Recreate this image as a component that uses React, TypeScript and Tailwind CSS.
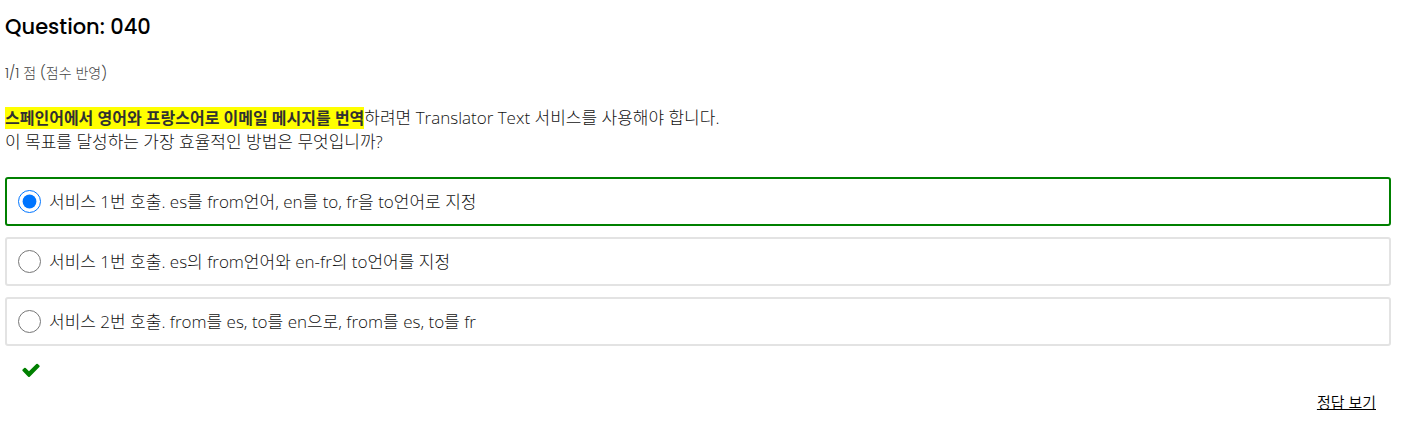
import { useState } from "react";

const options = [
  "서비스 1번 호출. es를 from언어, en를 to, fr을 to언어로 지정",
  "서비스 1번 호출. es의 from언어와 en-fr의 to언어를 지정",
  "서비스 2번 호출. from를 es, to를 en으로, from를 es, to를 fr",
];

function CheckIcon() {
  return (
    <svg role="img" aria-label="정답" viewBox="0 0 1792 1792" className="ml-4 mt-[14px] size-5 fill-[#008000]">
      <path d="M1671 566q0 40-28 68l-724 724-136 136q-28 28-68 28t-68-28l-136-136-362-362q-28-28-28-68t28-68l136-136q28-28 68-28t68 28l294 295 656-657q28-28 68-28t68 28l136 136q28 28 28 68z" />
    </svg>
  );
}

function Option({ text, index, checked, onSelect }: { text: string; index: number; checked: boolean; onSelect: () => void }) {
  return (
    <label
      htmlFor={`option-${index}`}
      className={`flex items-center gap-2 rounded-[3px] border-2 px-[11px] py-[10px] ${checked ? "border-[#008000]" : "border-[#e3e3e3]"}`}
    >
      <input id={`option-${index}`} type="radio" name="answer" checked={checked} onChange={onSelect} className="size-[23px] shrink-0" />
      <span className="leading-[25px]">{text}</span>
    </label>
  );
}

export default function App() {
  const [selected, setSelected] = useState(0);
  return (
    <main className="bg-white pl-[5px] pr-[11px] pt-[11px] font-['Open_Sans','Noto_Sans_CJK_KR',sans-serif] text-[17px] font-light text-[#111]">
      <h1 className="font-['Poppins','Inter',sans-serif] text-[21px] font-medium leading-8 text-black">Question: 040</h1>
      <p className="mt-5 font-['Poppins','Noto_Sans_CJK_KR',sans-serif] text-[14px] leading-5 text-[#444]">1/1 점 (점수 반영)</p>
      <p className="mt-[23px] leading-6">
        <mark className="bg-[#ff0] text-[16px] font-bold text-[#313131]">스페인어에서 영어와 프랑스어로 이메일 메시지를 번역</mark>
        하려면 Translator Text 서비스를 사용해야 합니다.
        <br />이 목표를 달성하는 가장 효율적인 방법은 무엇입니까?
      </p>
      <fieldset className="mt-[23px] flex flex-col gap-[11px]">
        {options.map((text, i) => (
          <Option key={text} text={text} index={i} checked={selected === i} onSelect={() => setSelected(i)} />
        ))}
      </fieldset>
      <CheckIcon />
      <div className="mt-[10px] flex justify-end pr-[15px]">
        <button type="button" className="text-[15px] font-[350] leading-6 text-black underline">정답 보기</button>
      </div>
    </main>
  );
}
